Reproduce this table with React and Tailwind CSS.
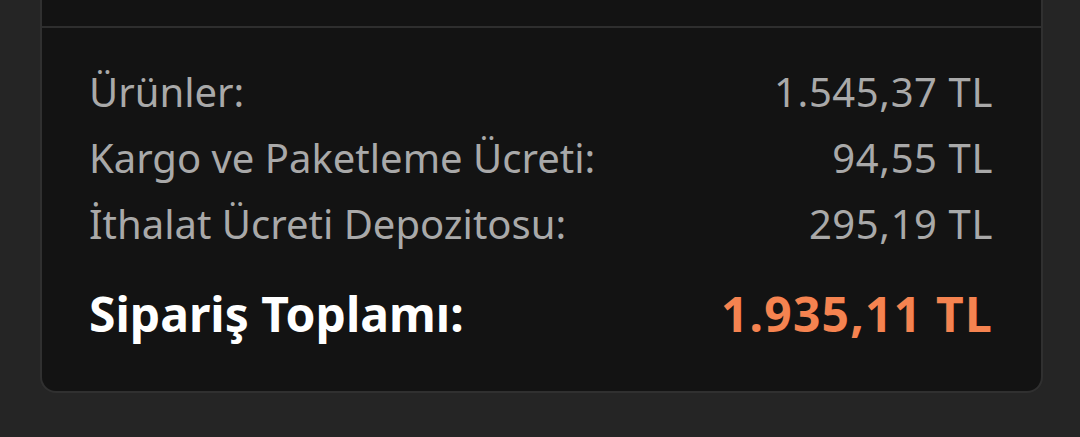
export default function App() {
  const rows = [
    ['Ürünler:', '1.545,37 TL'],
    ['Kargo ve Paketleme Ücreti:', '94,55 TL'],
    ['İthalat Ücreti Depozitosu:', '295,19 TL'],
  ];

  return (
    <div className="h-[437px] w-[1080px] overflow-hidden bg-[#252525] pl-10 pr-[37px]" style={{ fontFamily: '"Noto Sans", sans-serif' }}>
      <div className="rounded-b-2xl border-x-2 border-b-2 border-[#303030] bg-[#131313]">
        <div className="h-7 border-b-2 border-[#2e2e2e]" />
        <div className="pl-[47px] pr-[48px] pt-[31px] pb-[47px]">
          <div className="flex flex-col">
            {rows.map(([label, value]) => (
              <div key={label} className="flex items-center justify-between text-[40px] leading-[66px] text-[#a9a9a9]">
                <span>{label}</span>
                <span className="tracking-[0.6px]">{value}</span>
              </div>
            ))}
          </div>
          <div className="mt-[27px] flex items-center justify-between text-[48px] font-bold leading-[60px]">
            <span className="text-white">Sipariş Toplamı:</span>
            <span className="tracking-[1.2px] text-[#f58350]">1.935,11 TL</span>
          </div>
        </div>
      </div>
    </div>
  );
}
